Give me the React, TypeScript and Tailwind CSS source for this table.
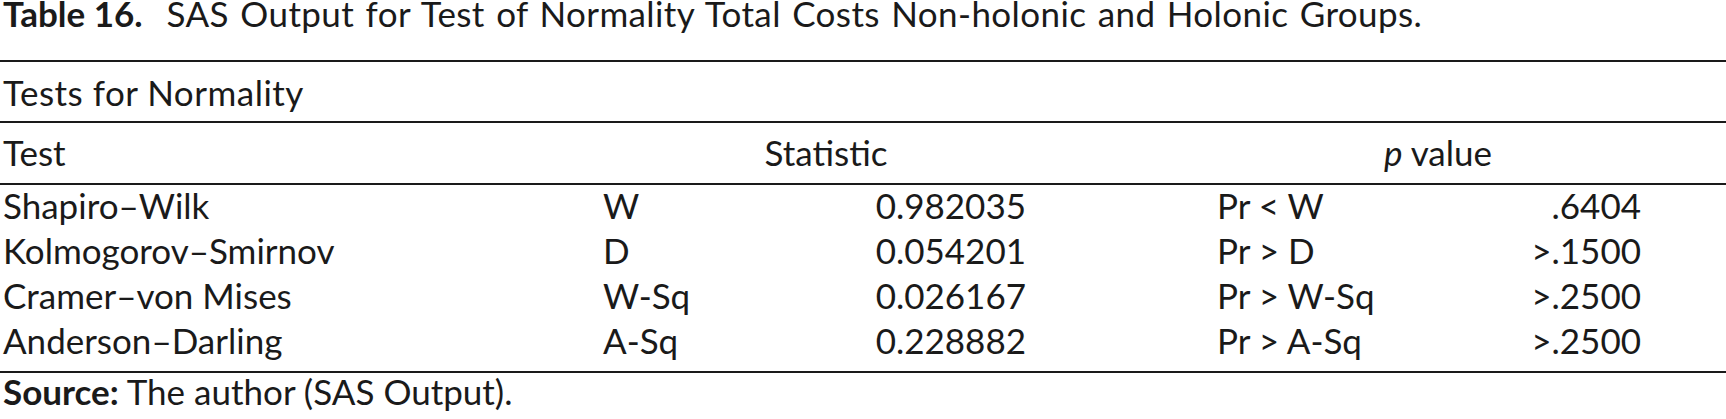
const rows = [
  { test: "Shapiro–Wilk", sym: "W", stat: "0.982035", pr: "Pr < W", p: ".6404" },
  { test: "Kolmogorov–Smirnov", sym: "D", stat: "0.054201", pr: "Pr > D", p: ">.1500" },
  { test: "Cramer–von Mises", sym: "W-Sq", stat: "0.026167", pr: "Pr > W-Sq", p: ">.2500" },
  { test: "Anderson–Darling", sym: "A-Sq", stat: "0.228882", pr: "Pr > A-Sq", p: ">.2500" },
]

// test | symbol | statistic | spacer | pr | p | rest
const cols = "grid grid-cols-[600px_230px_196px_191px_233px_191px_1fr]"

export default function App() {
  return (
    <div className="w-[1726px] h-[419px] bg-white text-[#1a1a1a] text-[35px] font-['Lato',sans-serif] overflow-hidden">
      {/* Caption */}
      <div className="h-[60px] pl-[3px] leading-[27px] whitespace-nowrap">
        <span className="font-bold">Table 16.</span>
        <span className="ml-[24px] tracking-[0.4px] [word-spacing:2px]">
          SAS Output for Test of Normality Total Costs Non-holonic and Holonic Groups.
        </span>
      </div>

      <div className="border-t-2 border-[#1a1a1a]" />
      <div className="h-[59px] pt-[8px] pl-[3px] leading-[44px] tracking-[0.5px]">Tests for Normality</div>

      <div className="border-t-2 border-[#1a1a1a]" />
      <div className={`${cols} h-[60px] pt-[7px] leading-[44px]`}>
        <div className="pl-[3px]">Test</div>
        <div className="col-span-2 text-center pl-[26px]">Statistic</div>
        <div />
        <div className="col-span-2 text-center pl-[18px]">
          <span className="italic">p</span> value
        </div>
      </div>

      <div className="border-t-2 border-[#1a1a1a]" />
      <div className="flex flex-col gap-[5px] pb-[11px]">
        {rows.map((r) => (
          <div key={r.test} className={`${cols} leading-[40px] whitespace-nowrap`}>
            <div className="pl-[3px]">{r.test}</div>
            <div className="pl-[3px]">{r.sym}</div>
            <div className="text-right">{r.stat}</div>
            <div />
            <div>{r.pr}</div>
            <div className="text-right">{r.p}</div>
          </div>
        ))}
      </div>

      <div className="border-t-2 border-[#1a1a1a]" />
      <div className="pl-[3px] leading-[37px]">
        <span className="font-bold">Source:</span> The author (SAS Output).
      </div>
    </div>
  )
}
